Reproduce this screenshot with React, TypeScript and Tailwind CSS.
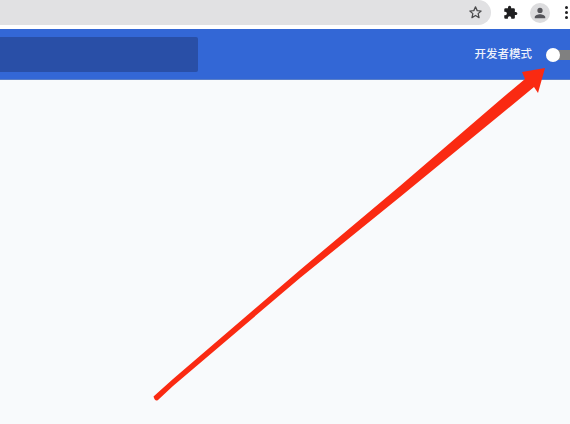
import React from "react";

function Arrow() {
  return (
    <svg className="absolute left-0 top-0 pointer-events-none" width="570" height="424" viewBox="0 0 570 424">
      <path d="M153.500 396.500 L173 379 L300 270 L400 186 L500 100 L525 79 L522 72 L545 68 L538 93 L534 87 L500 115 L400 197 L300 278 L173 386 L158 400 Q155 402 153.500 396.500 Z" fill="#fa2a12" />
    </svg>
  );
}

export default function App() {
  return (
    <div className="relative w-[570px] h-[424px] overflow-hidden bg-[#f8fafc] flex flex-col" style={{ fontFamily: '"Liberation Sans","Noto Sans CJK SC",sans-serif' }}>
      <div className="h-[29px] bg-white flex items-start shrink-0">
        <div className="w-[491px] h-[25px] bg-[#e1e1e3] rounded-r-[13px] flex items-center justify-end pr-[8px]">
          <svg width="15" height="15" viewBox="0 0 24 24" fill="none" stroke="#4a4a4c" strokeWidth="2" strokeLinejoin="round">
            <path d="M12 3l2.700 6 6.300.6-4.800 4.200 1.500 6.400L12 16.800l-5.700 3.400 1.500-6.400L3 9.600l6.300-.6z" />
          </svg>
        </div>
        <div className="flex-1 h-[25px] flex items-center pl-[12px] gap-[12px]">
          <svg width="15" height="15" viewBox="0 0 24 24" fill="#1f1f21">
            <path d="M20.500 11H19V7a2 2 0 0 0-2-2h-4V3.500a2.500 2.500 0 0 0-5 0V5H4a2 2 0 0 0-2 2v3.800h1.500a2.700 2.700 0 0 1 0 5.400H2V20a2 2 0 0 0 2 2h3.800v-1.500a2.700 2.700 0 0 1 5.400 0V22H17a2 2 0 0 0 2-2v-4h1.500a2.500 2.500 0 0 0 0-5z" />
          </svg>
          <div className="w-[20px] h-[20px] rounded-full bg-[#dcdcde] flex items-center justify-center">
            <svg width="14" height="14" viewBox="0 0 24 24" fill="#55555a">
              <path d="M12 12a4.500 4.500 0 1 0 0-9 4.500 4.500 0 0 0 0 9zm0 2c-3.500 0-9 1.700-9 5v2h18v-2c0-3.300-5.500-5-9-5z" />
            </svg>
          </div>
          <div className="flex flex-col gap-[2px] ml-[3px]">
            <div className="w-[3px] h-[3px] rounded-full bg-[#1f1f21]" />
            <div className="w-[3px] h-[3px] rounded-full bg-[#1f1f21]" />
            <div className="w-[3px] h-[3px] rounded-full bg-[#1f1f21]" />
          </div>
        </div>
      </div>
      <div className="h-[51px] bg-[#3367d6] border-b border-[#5a7fc8] flex items-center justify-between shrink-0">
        <div className="w-[198px] h-[35px] bg-[#294fa7] rounded-r-[2px] mt-[1px]" />
        <div className="flex items-center mt-[2px]">
          <span className="text-[11.5px] text-[#eef2fb] font-medium mr-[14px]">开发者模式</span>
          <div className="relative w-[24px] h-[10px] bg-[#808080] rounded-l-[5px]">
            <div className="absolute left-0 top-[-2px] w-[14px] h-[14px] rounded-full bg-white" />
          </div>
        </div>
      </div>
      <div className="flex-1" />
      <Arrow />
    </div>
  );
}
